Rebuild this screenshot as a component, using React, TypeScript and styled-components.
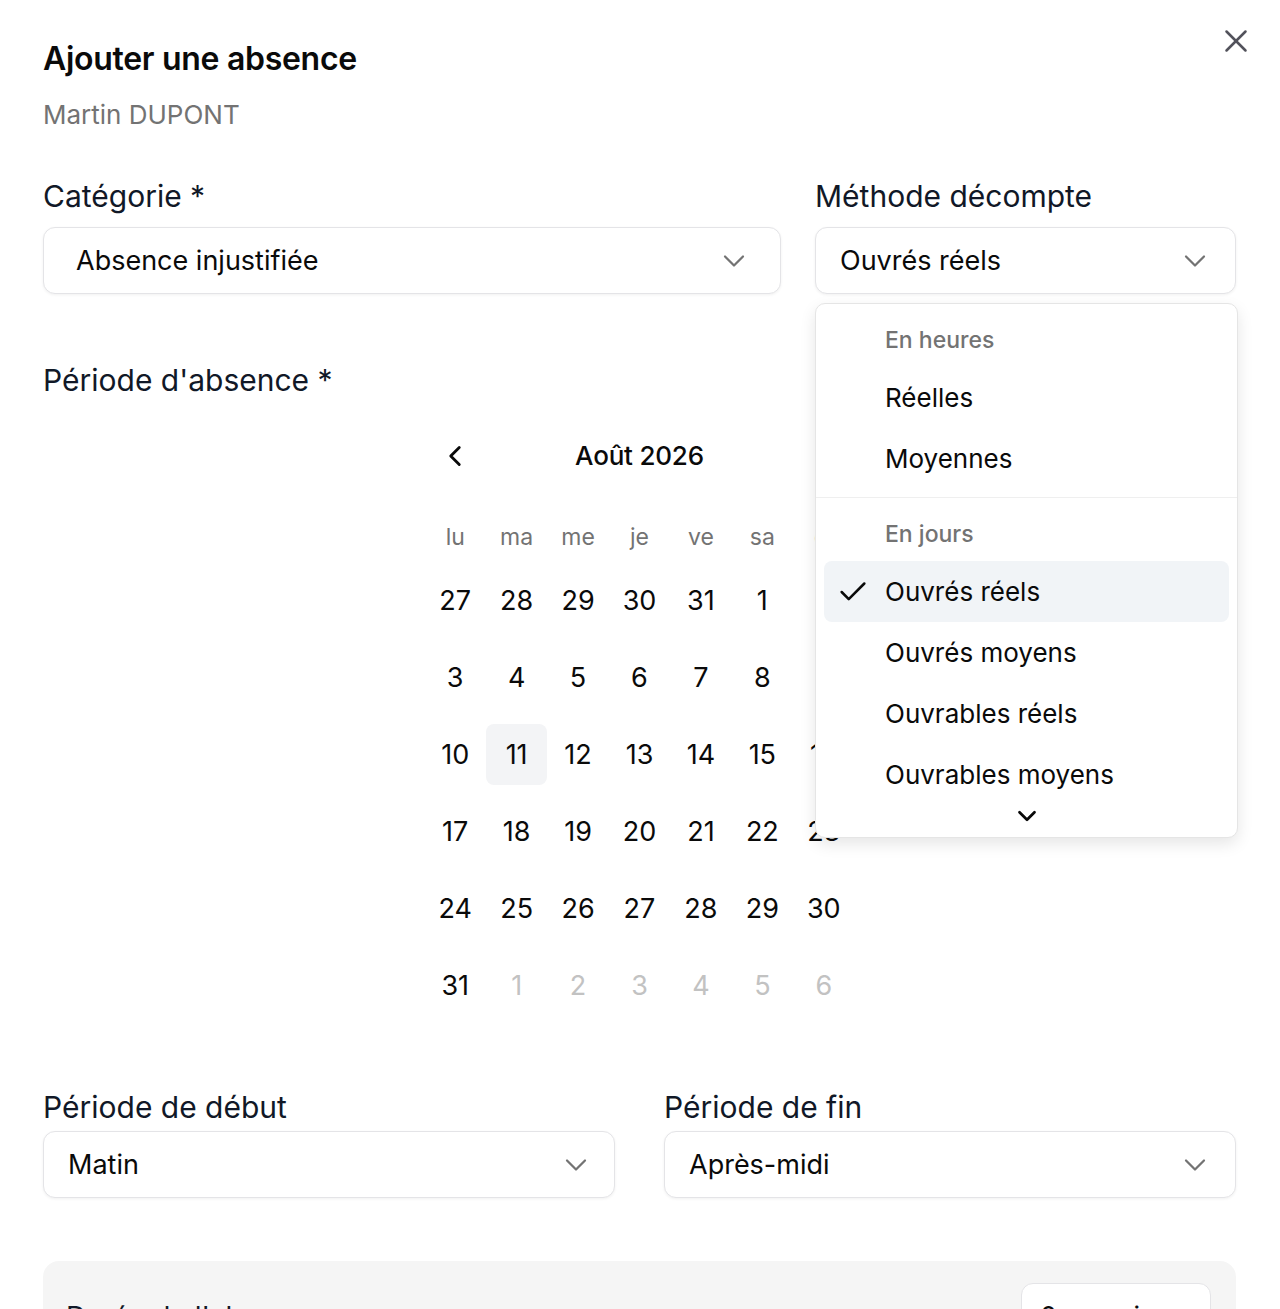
import styled, { createGlobalStyle } from 'styled-components';
import { X, ChevronDown, ChevronLeft, Check } from 'lucide-react';

const GlobalStyle = createGlobalStyle`
  html, body {
    margin: 0;
    padding: 0;
    background: #ffffff;
  }
  body {
    font-family: Inter, "Noto Sans", sans-serif;
    color: #0a0a0a;
    -webkit-font-smoothing: antialiased;
  }
  * {
    box-sizing: border-box;
  }
`;

const weekDays = ['lu', 'ma', 'me', 'je', 've', 'sa', 'di'];

// août 2026, semaine qui commence le lundi
const weeks: { day: number; outside?: boolean }[][] = [
  [27, 28, 29, 30, 31, 1, 2].map((d) => ({ day: d })),
  [3, 4, 5, 6, 7, 8, 9].map((d) => ({ day: d })),
  [10, 11, 12, 13, 14, 15, 16].map((d) => ({ day: d })),
  [17, 18, 19, 20, 21, 22, 23].map((d) => ({ day: d })),
  [24, 25, 26, 27, 28, 29, 30].map((d) => ({ day: d })),
  [{ day: 31 }, ...[1, 2, 3, 4, 5, 6].map((d) => ({ day: d, outside: true }))],
];

const App = () => {
  return (
    <Page>
      <GlobalStyle />
      <CloseButton aria-label="Fermer">
        <X size={38} strokeWidth={1.6} />
      </CloseButton>

      <Title>Ajouter une absence</Title>
      <Subtitle>Martin DUPONT</Subtitle>

      <TopRow>
        <Field>
          <Label>Catégorie *</Label>
          <SelectBox $inset={32} $end={28}>
            <SelectValue>Absence injustifiée</SelectValue>
            <ChevronDown size={36} strokeWidth={1.5} color="#737373" />
          </SelectBox>
        </Field>

        <Field>
          <Label>Méthode décompte</Label>
          <SelectBox $inset={24} $end={22}>
            <SelectValue>Ouvrés réels</SelectValue>
            <ChevronDown size={36} strokeWidth={1.5} color="#737373" />
          </SelectBox>

          <Menu>
            <MenuGroupLabel>En heures</MenuGroupLabel>
            <MenuItem>Réelles</MenuItem>
            <MenuItem>Moyennes</MenuItem>
            <MenuSeparator />
            <MenuGroupLabel>En jours</MenuGroupLabel>
            <MenuItem $selected>
              <CheckMark>
                <Check size={34} strokeWidth={1.8} />
              </CheckMark>
              Ouvrés réels
            </MenuItem>
            <MenuItem>Ouvrés moyens</MenuItem>
            <MenuItem>Ouvrables réels</MenuItem>
            <MenuItem>Ouvrables moyens</MenuItem>
            <MenuScroll>
              <ChevronDown size={30} strokeWidth={2.2} />
            </MenuScroll>
          </Menu>
        </Field>
      </TopRow>

      <SectionLabel>Période d'absence *</SectionLabel>

      <Calendar>
        <CalNav>
          <NavButton aria-label="Mois précédent">
            <ChevronLeft size={34} strokeWidth={2} />
          </NavButton>
          <MonthTitle>Août 2026</MonthTitle>
          <span />
        </CalNav>

        <WeekRow>
          {weekDays.map((d) => (
            <WeekDay key={d}>{d}</WeekDay>
          ))}
        </WeekRow>

        <DayGrid>
          {weeks.map((week, wi) =>
            week.map((cell, di) => (
              <Day key={`${wi}-${di}`} $outside={!!cell.outside} $today={wi === 2 && cell.day === 11}>
                {cell.day}
              </Day>
            ))
          )}
        </DayGrid>
      </Calendar>

      <BottomRow>
        <Field>
          <Label $tight>Période de début</Label>
          <SelectBox $inset={24} $end={20}>
            <SelectValue>Matin</SelectValue>
            <ChevronDown size={36} strokeWidth={1.5} color="#737373" />
          </SelectBox>
        </Field>
        <Field>
          <Label $tight>Période de fin</Label>
          <SelectBox $inset={24} $end={22}>
            <SelectValue>Après-midi</SelectValue>
            <ChevronDown size={36} strokeWidth={1.5} color="#737373" />
          </SelectBox>
        </Field>
      </BottomRow>

      <Summary>
        <SummaryLabel>Durée de l'absence</SummaryLabel>
        <SummaryValue>0 semaine</SummaryValue>
      </Summary>
    </Page>
  );
};

export default App;

const Page = styled.div`
  position: relative;
  width: 1280px;
  height: 1309px;
  overflow: hidden;
  padding: 39px 44px 0 43px;
  background: #ffffff;
`;

const CloseButton = styled.button`
  position: absolute;
  top: 22px;
  right: 25px;
  padding: 0;
  border: none;
  background: none;
  color: #52525b;
  display: flex;
  cursor: pointer;
`;

const Title = styled.h1`
  margin: 0;
  font-size: 32px;
  line-height: 40px;
  font-weight: 600;
  letter-spacing: -0.3px;
  color: #0a0a0a;
`;

const Subtitle = styled.p`
  margin: 20px 0 0;
  font-size: 26px;
  line-height: 32px;
  color: #737373;
`;

const TopRow = styled.div`
  display: grid;
  grid-template-columns: 1fr 421px;
  column-gap: 34px;
  margin-top: 47px;
`;

const BottomRow = styled.div`
  display: grid;
  grid-template-columns: 1fr 1fr;
  column-gap: 49px;
  margin-top: 73px;
`;

const Field = styled.div`
  position: relative;
  display: flex;
  flex-direction: column;
`;

const Label = styled.label<{ $tight?: boolean }>`
  font-size: 30px;
  line-height: 36px;
  color: #111827;
  margin-bottom: ${(p) => (p.$tight ? '6px' : '13px')};
`;

const SectionLabel = styled.div`
  margin-top: 68px;
  font-size: 30px;
  line-height: 36px;
  color: #111827;
`;

const SelectBox = styled.div<{ $inset: number; $end: number }>`
  height: 67px;
  display: flex;
  align-items: center;
  justify-content: space-between;
  padding: 0 ${(p) => p.$end}px 0 ${(p) => p.$inset}px;
  border: 1.5px solid #e4e4e7;
  border-radius: 12px;
  background: #ffffff;
  box-shadow: 0 1px 3px rgba(0, 0, 0, 0.06);
`;

const SelectValue = styled.span`
  font-size: 27px;
  color: #0a0a0a;
`;

const Menu = styled.div`
  position: absolute;
  top: calc(100% + 9px);
  left: 0;
  width: 423px;
  height: 535px;
  overflow: hidden;
  padding: 8px;
  background: #ffffff;
  border: 1px solid #e5e5e5;
  border-radius: 10px;
  box-shadow: 0 6px 16px rgba(0, 0, 0, 0.1);
  z-index: 10;
`;

const MenuGroupLabel = styled.div`
  height: 55px;
  display: flex;
  align-items: center;
  padding-left: 61px;
  font-size: 23px;
  font-weight: 500;
  color: #737373;
`;

const MenuItem = styled.div<{ $selected?: boolean }>`
  position: relative;
  height: 61px;
  display: flex;
  align-items: center;
  padding-left: 61px;
  border-radius: 8px;
  font-size: 26px;
  color: #0a0a0a;
  background: ${(p) => (p.$selected ? '#f1f4f7' : 'transparent')};
`;

const CheckMark = styled.span`
  position: absolute;
  left: 12px;
  top: 50%;
  transform: translateY(-50%);
  display: flex;
`;

const MenuSeparator = styled.div`
  height: 1px;
  margin: 8px -8px;
  background: #efefef;
`;

const MenuScroll = styled.div`
  height: 26px;
  margin-top: -4px;
  display: flex;
  justify-content: center;
  align-items: flex-start;
  color: #0a0a0a;
`;

const Calendar = styled.div`
  width: 430px;
  margin: 27px auto 0;
`;

const CalNav = styled.div`
  height: 61px;
  display: grid;
  grid-template-columns: 61px 1fr 61px;
  align-items: center;
`;

const NavButton = styled.button`
  width: 61px;
  height: 61px;
  padding: 0;
  border: none;
  background: none;
  color: #0a0a0a;
  display: flex;
  align-items: center;
  justify-content: center;
`;

const MonthTitle = styled.div`
  text-align: center;
  font-size: 26px;
  font-weight: 500;
  letter-spacing: -0.2px;
  color: #0a0a0a;
`;

const WeekRow = styled.div`
  display: grid;
  grid-template-columns: repeat(7, 1fr);
  height: 40px;
  margin-top: 31px;
`;

const WeekDay = styled.div`
  display: flex;
  align-items: center;
  justify-content: center;
  font-size: 23px;
  color: #737373;
`;

const DayGrid = styled.div`
  display: grid;
  grid-template-columns: repeat(7, 1fr);
  grid-auto-rows: 61px;
  row-gap: 16px;
  margin-top: 13px;
`;

const Day = styled.div<{ $outside: boolean; $today: boolean }>`
  display: flex;
  align-items: center;
  justify-content: center;
  border-radius: 8px;
  font-size: 27px;
  color: ${(p) => (p.$outside ? '#c2c2c2' : '#0a0a0a')};
  background: ${(p) => (p.$today ? '#f3f4f6' : 'transparent')};
`;

const Summary = styled.div`
  margin-top: 63px;
  height: 140px;
  display: flex;
  justify-content: space-between;
  align-items: flex-start;
  padding: 22px 25px 0 23px;
  background: #f5f5f5;
  border-radius: 16px;
`;

const SummaryLabel = styled.div`
  margin-top: 16px;
  font-size: 28px;
  line-height: 36px;
  color: #111827;
`;

const SummaryValue = styled.div`
  width: 190px;
  height: 67px;
  display: flex;
  align-items: center;
  padding-left: 18px;
  border: 1.5px solid #e4e4e7;
  border-radius: 12px;
  background: #ffffff;
  font-size: 27px;
  color: #0a0a0a;
`;
